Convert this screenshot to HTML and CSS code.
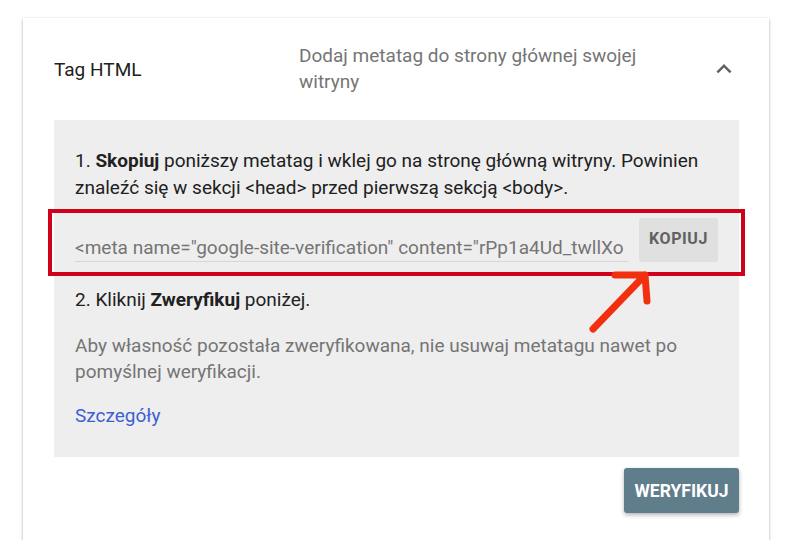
FILE: index.html
```html
<!DOCTYPE html>
<html lang="pl">
<head>
<meta charset="utf-8">
<link rel="stylesheet" href="styles.css">
</head>
<body>
<div class="card">
  <div class="header">
    <div class="title">Tag HTML</div>
    <div class="desc">Dodaj metatag do strony głównej swojej witryny</div>
    <svg class="chevron" width="30" height="30" viewBox="0 0 24 24"><path d="M7.41 15.41L12 10.83l4.59 4.58L18 14l-6-6-6 6z" fill="#616161"/></svg>
  </div>
  <div class="panel">
    <p class="step">1. <b>Skopiuj</b> poniższy metatag i wklej go na stronę główną witryny. Powinien znaleźć się w sekcji &lt;head&gt; przed pierwszą sekcją &lt;body&gt;.</p>
    <div class="copy-row">
      <div class="field">&lt;meta name="google-site-verification" content="rPp1a4Ud_twllXo</div>
      <button class="copy-btn">KOPIUJ</button>
      <div class="highlight"></div>
      <svg class="arrow" width="80" height="70" viewBox="0 0 80 70"><path d="M8 62 L60 8 M30 8 L60 8 L62 34" fill="none" stroke="#f2300f" stroke-width="7" stroke-linecap="round" stroke-linejoin="round"/></svg>
    </div>
    <p class="step step2">2. Kliknij <b>Zweryfikuj</b> poniżej.</p>
    <p class="note">Aby własność pozostała zweryfikowana, nie usuwaj metatagu nawet po pomyślnej weryfikacji.</p>
    <a class="link" href="#">Szczegóły</a>
  </div>
  <div class="actions">
    <button class="verify-btn">WERYFIKUJ</button>
  </div>
</div>
</body>
</html>
```
FILE: styles.css
```css
html, body {
  margin: 0;
  padding: 0;
  background: #fff;
}
body {
  font-family: Roboto, "Noto Sans", sans-serif;
  font-size: 19px;
  color: #212121;
}
.card {
  margin: 18px 0 0 23px;
  width: 746px;
  height: 522px;
  background: #fff;
  box-shadow: 0 1px 3px rgba(0,0,0,0.25), 0 1px 2px rgba(0,0,0,0.12);
  box-sizing: border-box;
}
.header {
  display: flex;
  align-items: center;
  height: 102px;
  padding-left: 31px;
  box-sizing: border-box;
}
.title {
  width: 245px;
  color: #212121;
}
.desc {
  width: 365px;
  color: #757575;
  line-height: 26px;
}
.chevron {
  margin-left: 45px;
}
.panel {
  margin: 0 30px 0 31px;
  background: #eeeeee;
  padding: 27px 21px 0 21px;
  height: 337px;
  box-sizing: border-box;
}
.step {
  margin: 0;
  line-height: 27px;
}
.step b { font-weight: 700; }
.copy-row {
  position: relative;
  display: flex;
  align-items: flex-end;
  margin-top: 17px;
  height: 44px;
}
.field {
  width: 553px;
  color: #757575;
  border-bottom: 1px solid #d6d6d6;
  line-height: 24px;
  padding-bottom: 1px;
  white-space: nowrap;
  overflow: hidden;
}
.copy-btn {
  margin-left: 11px;
  width: 79px;
  height: 44px;
  border: none;
  background: #e0e0e0;
  color: #616161;
  font-family: Roboto, sans-serif;
  font-weight: 700;
  font-size: 16px;
  letter-spacing: 0.6px;
  padding: 0 0 4px;
  border-radius: 2px;
}
.highlight {
  position: absolute;
  left: -27px;
  top: -9px;
  width: 697px;
  height: 67px;
  border: 4px solid #d0021b;
  box-sizing: border-box;
}
.arrow {
  position: absolute;
  left: 510px;
  top: 49px;
}
.step2 {
  margin-top: 24px;
}
.note {
  margin: 20px 0 0;
  line-height: 26px;
  color: #757575;
}
.link {
  display: block;
  margin-top: 17px;
  line-height: 27px;
  color: #3d5fd1;
  text-decoration: none;
}
.actions {
  display: flex;
  justify-content: flex-end;
  padding: 11px 30px 0 0;
}
.verify-btn {
  width: 115px;
  height: 45px;
  border: none;
  border-radius: 3px;
  background: #607d8b;
  color: #fff;
  font-family: Roboto, sans-serif;
  font-weight: 700;
  font-size: 17.5px;
  padding: 0;
  box-shadow: 0 2px 4px rgba(0,0,0,0.3);
}
```
